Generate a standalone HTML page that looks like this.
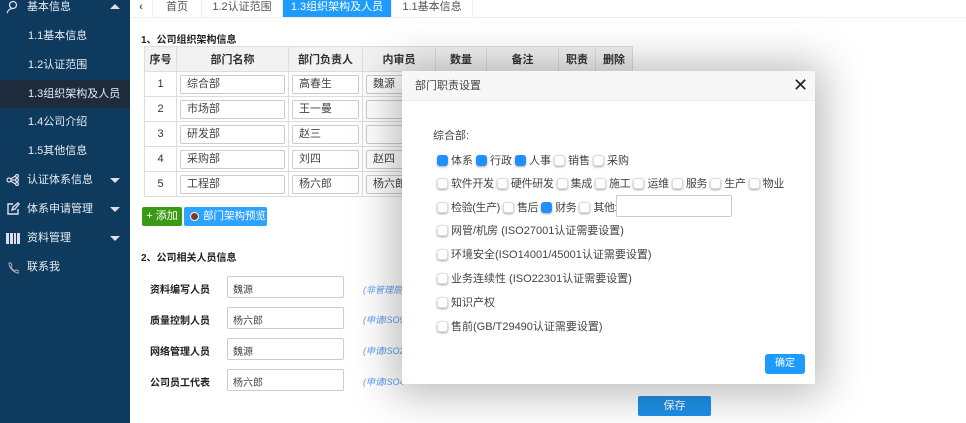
<!DOCTYPE html>
<html><head><meta charset="utf-8"><style>
*{box-sizing:border-box;margin:0;padding:0}
body{width:966px;height:423px;overflow:hidden;background:#fff;font-family:"Liberation Sans","Noto Sans CJK SC",sans-serif;font-size:11px;color:#333;position:relative}
.a{position:absolute}
#side{left:0;top:0;width:130px;height:423px;background:#0e3a5e;color:#e6edf3}
.si{position:absolute;left:0;width:130px;height:28px;line-height:28px;font-size:11px}
.sub{padding-left:28px}
.top{padding-left:27px}
.caret{position:absolute;right:10px;top:12px;width:0;height:0;border-left:5px solid transparent;border-right:5px solid transparent;border-top:5px solid #dde}
.caretup{border-top:none;border-bottom:5px solid #dde;top:11px}
.tab{position:absolute;top:0;height:17px;line-height:15px;text-align:center;font-size:11px;color:#555;border-right:1px solid #eee}
table{border-collapse:collapse;position:absolute;left:144px;top:46px;table-layout:fixed}
td,th{border:1px solid #ddd;height:25px;text-align:center;font-size:11px;padding:0}
th{background:#f2f2f2;font-weight:bold;color:#333}
.inp{border:1px solid #ccc;border-radius:2px;height:19px;margin:0 3px;text-align:left;padding-left:6px;line-height:17px;color:#444;overflow:hidden;white-space:nowrap}
.cb{display:inline-block;width:11px;height:11px;border-radius:3px;background:#fff;box-shadow:0 1px 2px rgba(0,0,0,.35);border:1px solid #ddd;vertical-align:-2px;margin-right:3px}
.on{background:#1e90ff;border-color:#1e90ff}
.row{position:absolute;left:437px;white-space:nowrap;font-size:11px;color:#444}
.row span.l{margin-right:3px}
.lab{position:absolute;left:150px;font-weight:bold;font-size:10px;color:#222}
.fin{position:absolute;left:227px;width:117px;height:22px;border:1px solid #ccc;border-radius:2px;padding:4px 0 0 5px;font-size:10px;color:#444}
.note{position:absolute;left:363px;font-size:9px;color:#5b9cf0;font-style:italic}
</style></head><body>
<div id="side" class="a">
<div class="si top" style="top:-7px;background:#0e3a5e"><svg class="a" style="left:6px;top:7px" width="14" height="14" viewBox="0 0 14 14" fill="none" stroke="#dde" stroke-width="1.3"><circle cx="7" cy="5" r="3.5"/><path d="M1 13c1-3 3-4.5 6-4.5"/></svg>基本信息<div class="caret caretup"></div></div>
<div class="si sub" style="top:22px">1.1基本信息</div>
<div class="si sub" style="top:51px">1.2认证范围</div>
<div class="si sub" style="top:80px;background:#1d2b3c">1.3组织架构及人员</div>
<div class="si sub" style="top:108px">1.4公司介绍</div>
<div class="si sub" style="top:137px">1.5其他信息</div>
<div class="si top" style="top:166px"><svg class="a" style="left:6px;top:8px" width="14" height="12" viewBox="0 0 14 12" fill="none" stroke="#dde" stroke-width="1.2"><circle cx="3" cy="6" r="2"/><circle cx="11" cy="2" r="1.5"/><circle cx="11" cy="6" r="1.5"/><circle cx="11" cy="10" r="1.5"/><path d="M5 6h4.5M4.5 5l5-3M4.5 7l5 3"/></svg>认证体系信息<div class="caret"></div></div>
<div class="si top" style="top:195px"><svg class="a" style="left:6px;top:7px" width="14" height="14" viewBox="0 0 14 14" fill="none" stroke="#dde" stroke-width="1.4"><path d="M7 2H2v10h10V7"/><path d="M6 8l1-3 5-4 1 1-4 5z"/></svg>体系申请管理<div class="caret"></div></div>
<div class="si top" style="top:224px"><svg class="a" style="left:6px;top:9px" width="14" height="11" viewBox="0 0 14 11"><rect x="0" y="0" width="3" height="11" fill="#dde"/><rect x="4" y="0" width="3" height="11" fill="#dde"/><rect x="8" y="0" width="2" height="11" fill="#dde"/><rect x="11" y="0" width="3" height="11" fill="#dde"/></svg>资料管理<div class="caret"></div></div>
<div class="si top" style="top:253px"><svg class="a" style="left:7px;top:9px" width="12" height="12" viewBox="0 0 12 12" fill="none" stroke="#aab" stroke-width="1"><path d="M2 1l2 0 1 3-1 1c1 2 2 3 4 4l1-1 3 1v2c-5 0-10-5-10-10z"/></svg>联系我</div>
</div>

<div class="a" style="left:130px;top:17px;width:836px;height:1px;background:#eee"></div>
<div class="tab" style="left:130px;width:23px;font-weight:bold">&lsaquo;</div>
<div class="tab" style="left:153px;width:49px">首页</div>
<div class="tab" style="left:202px;width:81px">1.2认证范围</div>
<div class="tab" style="left:283px;width:109px;background:#1e9bff;color:#fff">1.3组织架构及人员</div>
<div class="tab" style="left:392px;width:81px">1.1基本信息</div>

<div class="a" style="left:141px;top:31px;font-weight:bold;font-size:10px;color:#222">1、公司组织架构信息</div>
<table>
<colgroup><col style="width:32px"><col style="width:112px"><col style="width:74px"><col style="width:73px"><col style="width:51px"><col style="width:72px"><col style="width:37px"><col style="width:37px"></colgroup>
<tr><th>序号</th><th>部门名称</th><th>部门负责人</th><th>内审员</th><th>数量</th><th>备注</th><th>职责</th><th>删除</th></tr>
<tr><td>1</td><td><div class="inp">综合部</div></td><td><div class="inp">高春生</div></td><td><div class="inp">魏源</div></td><td></td><td></td><td></td><td></td></tr>
<tr><td>2</td><td><div class="inp">市场部</div></td><td><div class="inp">王一曼</div></td><td><div class="inp"></div></td><td></td><td></td><td></td><td></td></tr>
<tr><td>3</td><td><div class="inp">研发部</div></td><td><div class="inp">赵三</div></td><td><div class="inp"></div></td><td></td><td></td><td></td><td></td></tr>
<tr><td>4</td><td><div class="inp">采购部</div></td><td><div class="inp">刘四</div></td><td><div class="inp">赵四</div></td><td></td><td></td><td></td><td></td></tr>
<tr><td>5</td><td><div class="inp">工程部</div></td><td><div class="inp">杨六郎</div></td><td><div class="inp">杨六郎</div></td><td></td><td></td><td></td><td></td></tr>
</table>
<div class="a" style="left:142px;top:207px;width:40px;height:19px;background:#3a9a14;border-radius:2px;color:#fff;line-height:19px;text-align:center;font-size:11px">+ 添加</div>
<div class="a" style="left:184px;top:207px;width:83px;height:19px;background:#2ea2ff;border-radius:2px;color:#fff;line-height:19px;font-size:10.5px;padding-left:19px;white-space:nowrap"><span class="a" style="left:7px;top:6px;width:7px;height:7px;border-radius:50%;background:#7a3b22;box-shadow:0 0 0 1px #fff"></span>部门架构预览</div>

<div class="a" style="left:141px;top:249px;font-weight:bold;font-size:10px;color:#222">2、公司相关人员信息</div>
<div class="lab" style="top:281px">资料编写人员</div><div class="fin" style="top:276px">魏源</div><div class="note" style="top:283px">(非管理层)</div>
<div class="lab" style="top:312px">质量控制人员</div><div class="fin" style="top:307px">杨六郎</div><div class="note" style="top:313px">(申请ISO9</div>
<div class="lab" style="top:343px">网络管理人员</div><div class="fin" style="top:338px">魏源</div><div class="note" style="top:344px">(申请ISO2</div>
<div class="lab" style="top:374px">公司员工代表</div><div class="fin" style="top:369px">杨六郎</div><div class="note" style="top:375px">(申请ISO4</div>
<div class="a" style="left:638px;top:396px;width:73px;height:20px;background:#1e90e8;border-radius:2px;color:#fff;text-align:center;line-height:20px;font-size:11px">保存</div>

<div class="a" style="left:402px;top:71px;width:413px;height:313px;background:#fff;box-shadow:0 2px 40px 8px rgba(0,0,0,.28)">
<div class="a" style="left:0;top:0;width:413px;height:30px;background:#f7f7f7;border-bottom:1px solid #eee;line-height:30px;padding-left:13px;font-size:11px;color:#444">部门职责设置</div>
<div class="a" style="left:391px;top:4px;font-size:18px;color:#222">✕</div>
<div class="a" style="left:363px;top:283px;width:40px;height:20px;background:#1e9bff;border-radius:3px;color:#fff;text-align:center;line-height:20px;font-size:10px">确定</div>
</div>
<div class="a" style="left:433px;top:127px;font-size:11px;color:#444">综合部:</div>
<div class="row" style="top:152px"><span class="cb on"></span><span class="l">体系</span><span class="cb on"></span><span class="l">行政</span><span class="cb on"></span><span class="l">人事</span><span class="cb"></span><span class="l">销售</span><span class="cb"></span><span class="l">采购</span></div>
<div class="row" style="top:175px;letter-spacing:-0.3px"><span class="cb"></span><span class="l">软件开发</span><span class="cb"></span><span class="l">硬件研发</span><span class="cb"></span><span class="l">集成</span><span class="cb"></span><span class="l">施工</span><span class="cb"></span><span class="l">运维</span><span class="cb"></span><span class="l">服务</span><span class="cb"></span><span class="l">生产</span><span class="cb"></span><span class="l">物业</span></div>
<div class="row" style="top:199px;letter-spacing:-0.4px"><span class="cb"></span><span class="l">检验(生产)</span><span class="cb"></span><span class="l">售后</span><span class="cb on"></span><span class="l">财务</span><span class="cb"></span><span>其他:</span></div>
<div class="a" style="left:616px;top:195px;width:116px;height:22px;border:1px solid #ccc;border-radius:2px"></div>
<div class="row" style="top:222px"><span class="cb"></span>网管/机房 (ISO27001认证需要设置)</div>
<div class="row" style="top:246px"><span class="cb"></span>环境安全(ISO14001/45001认证需要设置)</div>
<div class="row" style="top:270px"><span class="cb"></span>业务连续性 (ISO22301认证需要设置)</div>
<div class="row" style="top:294px"><span class="cb"></span>知识产权</div>
<div class="row" style="top:318px"><span class="cb"></span>售前(GB/T29490认证需要设置)</div>
</body></html>
